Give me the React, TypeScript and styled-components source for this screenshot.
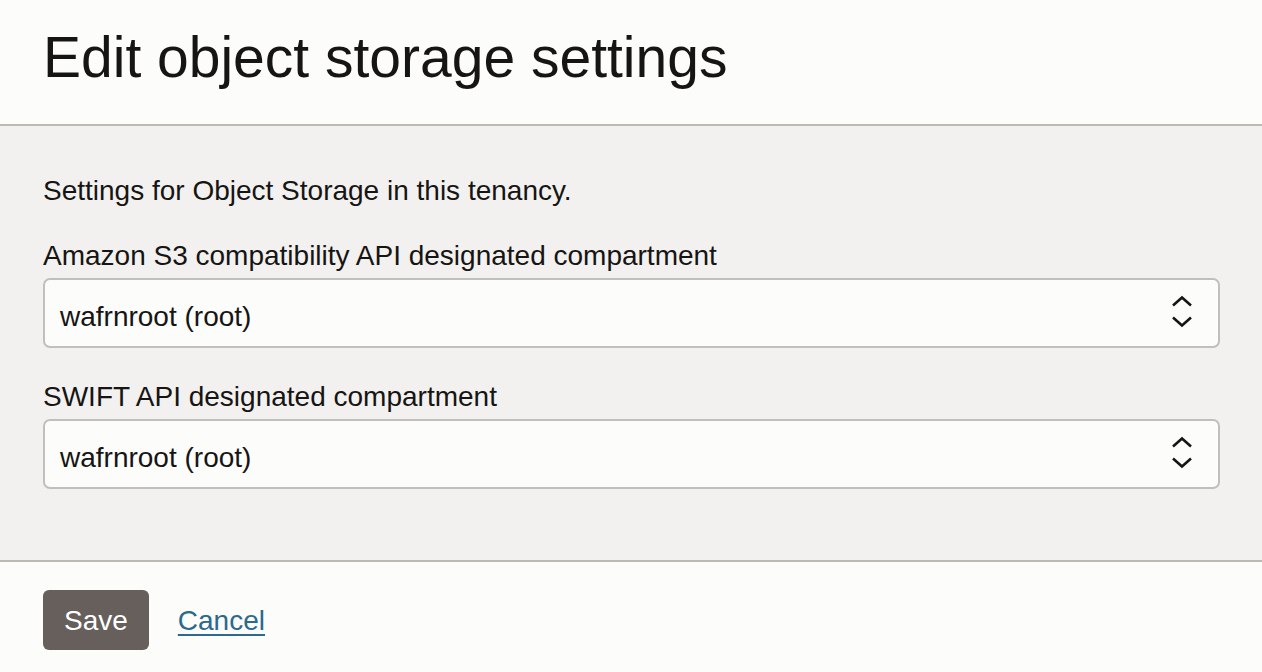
import React from "react";
import styled, { createGlobalStyle } from "styled-components";

const Global = createGlobalStyle`
  html, body { margin: 0; padding: 0; background: #fcfcfb; }
  body { font-family: "Liberation Sans", Arial, Helvetica, sans-serif; color: #161513; }
  * { box-sizing: border-box; }
`;

const Page = styled.div`
  width: 1262px;
  height: 672px;
  display: flex;
  flex-direction: column;
  background: #fcfcfb;
  overflow: hidden;
`;

const Header = styled.header`
  height: 126px;
  padding: 23px 40px 0 43px;
  border-bottom: 2px solid #bdb9b3;
  background: #fcfcfb;
`;

const Title = styled.h1`
  margin: 0;
  font-size: 57px;
  line-height: 68px;
  font-weight: 400;
  color: #161513;
`;

const Body = styled.main`
  height: 436px;
  background: #f2f1ef;
  border-bottom: 2px solid #bdb9b3;
  padding: 48px 42px 0 43px;
  display: flex;
  flex-direction: column;
`;

const Intro = styled.p`
  margin: 0 0 31px 0;
  font-size: 28px;
  line-height: 34px;
  color: #161513;
`;

const Field = styled.div<{ $gap?: number }>`
  display: flex;
  flex-direction: column;
  margin-bottom: ${(p) => p.$gap ?? 0}px;
`;

const Label = styled.label`
  font-size: 28px;
  line-height: 34px;
  color: #161513;
  margin-bottom: 5px;
`;

const SelectBox = styled.div`
  height: 70px;
  border: 2px solid #c2bfba;
  border-radius: 7px;
  background: #fcfcfb;
  display: flex;
  align-items: center;
  justify-content: space-between;
  padding: 0 24px 0 15px;
`;

const SelectValue = styled.span`
  font-size: 28px;
  line-height: 34px;
  color: #161513;
  margin-top: 8px;
`;

const Footer = styled.footer`
  flex: 1;
  background: #fcfcfb;
  padding: 28px 43px 0 43px;
  display: flex;
  align-items: flex-start;
  gap: 29px;
`;

const SaveButton = styled.button`
  height: 60px;
  padding: 2px 21px 0 21px;
  border: none;
  border-radius: 6px;
  background: #665f5b;
  color: #ffffff;
  font-family: inherit;
  font-size: 28px;
  line-height: 34px;
  cursor: pointer;
`;

const CancelLink = styled.a`
  margin-top: 14px;
  font-size: 28px;
  line-height: 34px;
  color: #2b6a8e;
  text-decoration: underline;
  text-decoration-thickness: 2px;
  text-underline-offset: 4px;
  cursor: pointer;
`;

const Chevrons = () => (
  <svg width="24" height="34" viewBox="0 0 24 34" fill="none" style={{ marginTop: -2 }}>
    <path d="M3 10.5 L12 2.5 L21 10.5" stroke="#161513" strokeWidth="2.6" />
    <path d="M3 22.5 L12 30.5 L21 22.5" stroke="#161513" strokeWidth="2.6" />
  </svg>
);

const Select = ({ value }: { value: string }) => (
  <SelectBox>
    <SelectValue>{value}</SelectValue>
    <Chevrons />
  </SelectBox>
);

export default function App() {
  return (
    <>
      <Global />
      <Page>
        <Header>
          <Title>Edit object storage settings</Title>
        </Header>
        <Body>
          <Intro>Settings for Object Storage in this tenancy.</Intro>
          <Field $gap={32}>
            <Label>Amazon S3 compatibility API designated compartment</Label>
            <Select value="wafrnroot (root)" />
          </Field>
          <Field>
            <Label>SWIFT API designated compartment</Label>
            <Select value="wafrnroot (root)" />
          </Field>
        </Body>
        <Footer>
          <SaveButton>Save</SaveButton>
          <CancelLink>Cancel</CancelLink>
        </Footer>
      </Page>
    </>
  );
}
